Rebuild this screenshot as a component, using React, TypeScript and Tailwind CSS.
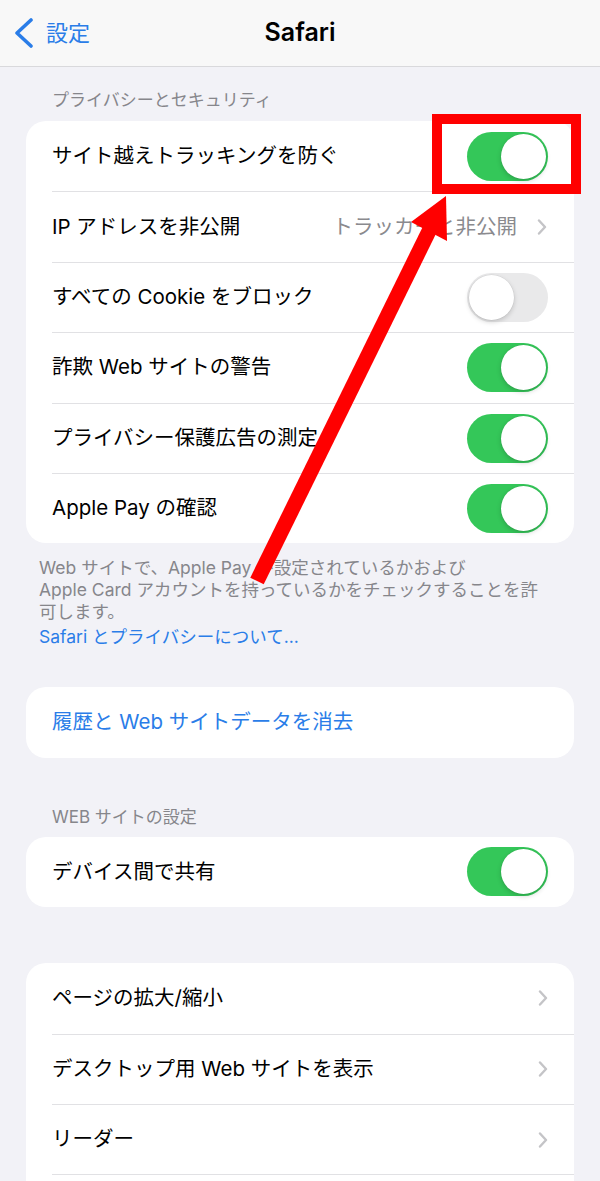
import type { ReactNode } from 'react';

const font = "font-['Inter','Noto_Sans_CJK_JP',sans-serif]";

function Toggle({ on }: { on: boolean }) {
  return (
    <div
      className={`flex h-[49px] w-[81px] items-center rounded-full p-[2px] ${
        on ? 'justify-end bg-[#34c759]' : 'justify-start bg-[#e9e9ea]'
      }`}
    >
      <div className="h-[45px] w-[45px] rounded-full bg-white shadow-[0_2px_5px_rgba(0,0,0,0.18),0_0_0_0.5px_rgba(0,0,0,0.06)]" />
    </div>
  );
}

function Chevron() {
  return (
    <svg width="10" height="16" viewBox="0 0 10 16" fill="none" className="shrink-0">
      <path d="M2 1.5 L8 8 L2 14.5" stroke="#c4c4c7" strokeWidth="2.4" strokeLinecap="round" strokeLinejoin="round" />
    </svg>
  );
}

function Row({ first, label, right, blue }: { first?: boolean; label?: string; right?: ReactNode; blue?: boolean }) {
  return (
    <div className="pl-[26px]">
      <div
        className={`flex h-[70.4px] items-center justify-between pr-[26px] ${first ? '' : 'border-t border-[#e1e1e4]'}`}
      >
        <span className={`text-[20.5px] ${blue ? 'text-[#2a7de8]' : 'text-black'}`}>{label}</span>
        {right}
      </div>
    </div>
  );
}

function Card({ children }: { children: ReactNode }) {
  return <div className="mx-[26px] overflow-hidden rounded-[20px] bg-white">{children}</div>;
}

function SectionTitle({ children }: { children: ReactNode }) {
  return <div className="px-[52px] text-[17px] leading-[24px] text-[#86868b]">{children}</div>;
}

export default function App() {
  return (
    <div className={`relative h-[1181px] w-[600px] overflow-hidden bg-[#f2f2f7] ${font}`}>
      {/* Nav bar */}
      <header className="grid h-[67px] grid-cols-[1fr_auto_1fr] items-center border-b border-[#d9d9dc] bg-[#f8f8f8]">
        <div className="flex items-center gap-[12px] pl-[14px] text-[#2a7de8]">
          <svg width="20" height="30" viewBox="0 0 20 30" fill="none">
            <path d="M17 2 L3 15 L17 28" stroke="#2a7de8" strokeWidth="3.6" strokeLinecap="round" strokeLinejoin="round" />
          </svg>
          <span className="text-[22px]">設定</span>
        </div>
        <h1 className="text-[25px] font-semibold text-black">Safari</h1>
        <div />
      </header>

      <div className="pt-[21px]">
        <SectionTitle>プライバシーとセキュリティ</SectionTitle>
      </div>

      <div className="mt-[9px]">
        <Card>
          <Row first label="サイト越えトラッキングを防ぐ" right={<Toggle on />} />
          <Row
            label="IP アドレスを非公開"
            right={
              <div className="flex items-center gap-[20px] pr-[1px]">
                <span className="text-[20.5px] text-[#8a8a8e]">トラッカーと非公開</span>
                <Chevron />
              </div>
            }
          />
          <Row label="すべての Cookie をブロック" right={<Toggle on={false} />} />
          <Row label="詐欺 Web サイトの警告" right={<Toggle on />} />
          <Row label="プライバシー保護広告の測定" right={<Toggle on />} />
          <Row label="Apple Pay の確認" right={<Toggle on />} />
        </Card>
      </div>

      {/* Footer note */}
      <div className="px-[39px] pt-[14px] text-[17.5px] leading-[22px] text-[#86868b]">
        <div>Web サイトで、Apple Pay が設定されているかおよび</div>
        <div>Apple Card アカウントを持っているかをチェックすることを許</div>
        <div>可します。</div>
        <div className="mt-[3px] text-[#2a7de8]">Safari とプライバシーについて...</div>
      </div>

      <div className="mt-[39px]">
        <Card>
          <Row first blue label="履歴と Web サイトデータを消去" />
        </Card>
      </div>

      <div className="mt-[47px]">
        <SectionTitle>WEB サイトの設定</SectionTitle>
      </div>

      <div className="mt-[8px]">
        <Card>
          <Row first label="デバイス間で共有" right={<Toggle on />} />
        </Card>
      </div>

      <div className="mt-[56px]">
        <Card>
          <Row first label="ページの拡大/縮小" right={<Chevron />} />
          <Row label="デスクトップ用 Web サイトを表示" right={<Chevron />} />
          <Row label="リーダー" right={<Chevron />} />
          <Row />
        </Card>
      </div>

      {/* Annotation: red box + arrow */}
      <div className="pointer-events-none absolute left-[432px] top-[114px] h-[80px] w-[149px] border-[10px] border-[#ff0000]" />
      <svg
        className="pointer-events-none absolute left-0 top-0"
        width="600"
        height="1181"
        viewBox="0 0 600 1181"
      >
        <line x1="257" y1="581" x2="430" y2="229" stroke="#ff0000" strokeWidth="15" />
        <polygon points="446,196 447,241 411,222" fill="#ff0000" />
      </svg>
    </div>
  );
}
